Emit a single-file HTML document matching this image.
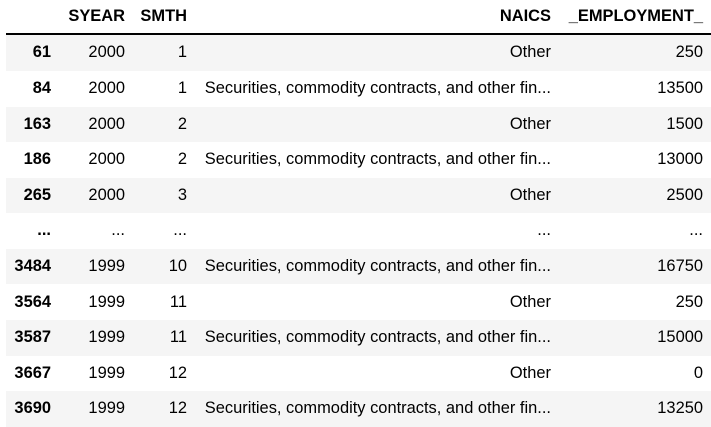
<!DOCTYPE html>
<html><head><style>
body{margin:0;width:711px;height:427px;background:#fff;font-family:"Liberation Sans",Arial,sans-serif;font-size:16.45px;color:#000;overflow:hidden;position:relative}
.r{position:absolute;left:6px;width:705px;height:35.6px}
.g{background:#f5f5f5}
.c{position:absolute;text-align:right;line-height:35.6px;white-space:nowrap}
.b{font-weight:bold}
.hl{position:absolute;left:6px;top:33px;width:705px;height:2px;background:#000}
</style></head><body>
<div class="r" style="top:0;height:33px">
<div class="c b" style="right:586px;line-height:33px">SYEAR</div>
<div class="c b" style="right:524px;line-height:33px">SMTH</div>
<div class="c b" style="right:160px;line-height:33px">NAICS</div>
<div class="c b" style="right:8px;line-height:33px">_EMPLOYMENT_</div>
</div>
<div class="hl"></div>
<div id="rows"></div>
<script>
var d=[["61","2000","1","Other","250"],["84","2000","1","Securities, commodity contracts, and other fin...","13500"],["163","2000","2","Other","1500"],["186","2000","2","Securities, commodity contracts, and other fin...","13000"],["265","2000","3","Other","2500"],["...","...","...","...","..."],["3484","1999","10","Securities, commodity contracts, and other fin...","16750"],["3564","1999","11","Other","250"],["3587","1999","11","Securities, commodity contracts, and other fin...","15000"],["3667","1999","12","Other","0"],["3690","1999","12","Securities, commodity contracts, and other fin...","13250"]];
var h="";for(var i=0;i<d.length;i++){var t=35.3+i*35.6;var r=d[i];
h+='<div class="r'+(i%2==0?' g':'')+'" style="top:'+t+'px">'+
'<div class="c b" style="right:660px">'+r[0]+'</div>'+
'<div class="c" style="right:586px">'+r[1]+'</div>'+
'<div class="c" style="right:524px">'+r[2]+'</div>'+
'<div class="c" style="right:160px">'+r[3]+'</div>'+
'<div class="c" style="right:8px">'+r[4]+'</div></div>';}
document.getElementById("rows").innerHTML=h;
</script>
</body></html>
